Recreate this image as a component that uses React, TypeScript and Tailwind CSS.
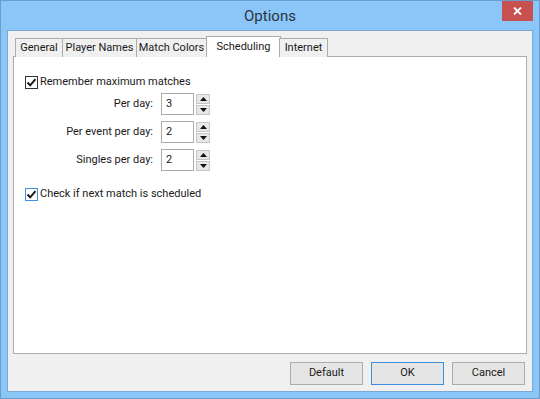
import React from 'react';

const font = { fontFamily: 'Roboto, "Liberation Sans", sans-serif' };

const tabs: { name: string; w: string }[] = [
  { name: 'General', w: 'w-[48px]' },
  { name: 'Player Names', w: 'w-[75px]' },
  { name: 'Match Colors', w: 'w-[71px]' },
  { name: 'Scheduling', w: 'w-[75px]' },
  { name: 'Internet', w: 'w-[49px]' },
];

function CheckBox({ focused }: { focused?: boolean }) {
  return (
    <span
      className={`flex h-[13px] w-[13px] items-center justify-center border bg-white ${
        focused ? 'border-[#3c8ee0]' : 'border-[#333333]'
      }`}
    >
      <svg width="11" height="11" viewBox="0 0 11 11">
        <path d="M1.5 5.5 L4.2 8.3 L9.5 2.2" fill="none" stroke="#1a1a1a" strokeWidth="2" />
      </svg>
    </span>
  );
}

function Spinner({ label, value }: { label: string; value: string }) {
  return (
    <div className="flex items-center">
      <span className="w-[128px] text-right">{label}</span>
      <div className="ml-[8px] flex h-[22px] w-[33px] items-center border border-[#acacac] bg-white pl-[4px]">
        {value}
      </div>
      <div className="ml-[2px] flex flex-col gap-[1px]">
        <button className="flex h-[10px] w-[14px] items-center justify-center border border-[#c6c6c6] bg-[#e8e8e8]">
          <svg width="7" height="4" viewBox="0 0 7 4">
            <path d="M0 4 L3.5 0 L7 4 Z" fill="#111" />
          </svg>
        </button>
        <button className="flex h-[10px] w-[14px] items-center justify-center border border-[#c6c6c6] bg-[#e8e8e8]">
          <svg width="7" height="4" viewBox="0 0 7 4">
            <path d="M0 0 L3.5 4 L7 0 Z" fill="#111" />
          </svg>
        </button>
      </div>
    </div>
  );
}

export default function App() {
  return (
    <div
      className="relative flex h-[399px] w-[540px] flex-col border border-[#6a9ccc] bg-[#8bc6f8] text-[11px] text-[#1a1a1a]"
      style={font}
    >
      {/* タイトルバー */}
      <div className="flex h-[29px] items-center justify-center pt-[2px] text-[15px] text-[#2b3440]">Options</div>
      <button className="absolute right-[6px] top-0 flex h-[20px] w-[31px] items-center justify-center bg-[#c75050]">
        <svg width="9" height="8" viewBox="0 0 9 8">
          <path d="M1 0.5 L8 7.5 M8 0.5 L1 7.5" stroke="#fff" strokeWidth="1.8" />
        </svg>
      </button>

      {/* クライアント領域 */}
      <div className="mx-[6px] flex h-[362px] flex-col border border-[#7fa6cf] bg-[#f0f0f0]">
        <div className="mx-[5px] mt-[5px] flex flex-col">
          {/* タブ */}
          <div className="relative z-10 -mb-px flex h-[21px] items-end pl-[2px]">
            {tabs.map((t) =>
              t.name === 'Scheduling' ? (
                <div
                  key={t.name}
                  className={`-mx-[1px] flex h-[21px] items-start justify-center whitespace-nowrap border border-b-0 border-[#acacac] bg-white pt-[2px] ${t.w}`}
                >
                  {t.name}
                </div>
              ) : (
                <div
                  key={t.name}
                  className={`-ml-px flex h-[19px] items-center justify-center whitespace-nowrap border border-b-0 border-[#acacac] bg-[#f0f0f0] pt-[1px] first:ml-0 ${t.w}`}
                >
                  {t.name}
                </div>
              )
            )}
          </div>

          {/* パネル */}
          <div className="flex h-[298px] flex-col border border-[#acacac] bg-white pl-[11px] pt-[18px]">
            <label className="flex items-center gap-[2px]">
              <CheckBox />
              <span className="leading-[14px]">Remember maximum matches</span>
            </label>
            <div className="mt-[4px] flex flex-col gap-[6px]">
              <Spinner label="Per day:" value="3" />
              <Spinner label="Per event per day:" value="2" />
              <Spinner label="Singles per day:" value="2" />
            </div>
            <label className="mt-[16px] flex items-center gap-[2px]">
              <CheckBox focused />
              <span className="leading-[14px]">Check if next match is scheduled</span>
            </label>
          </div>
        </div>

        {/* ボタン */}
        <div className="mt-[8px] flex justify-end gap-[8px] pr-[7px]">
          <button className="h-[23px] w-[73px] border border-[#acacac] bg-[#e5e5e5]">Default</button>
          <button className="h-[23px] w-[73px] border border-[#3c8ee0] bg-[#e5e5e5]">OK</button>
          <button className="h-[23px] w-[73px] border border-[#acacac] bg-[#e5e5e5]">Cancel</button>
        </div>
      </div>
    </div>
  );
}
